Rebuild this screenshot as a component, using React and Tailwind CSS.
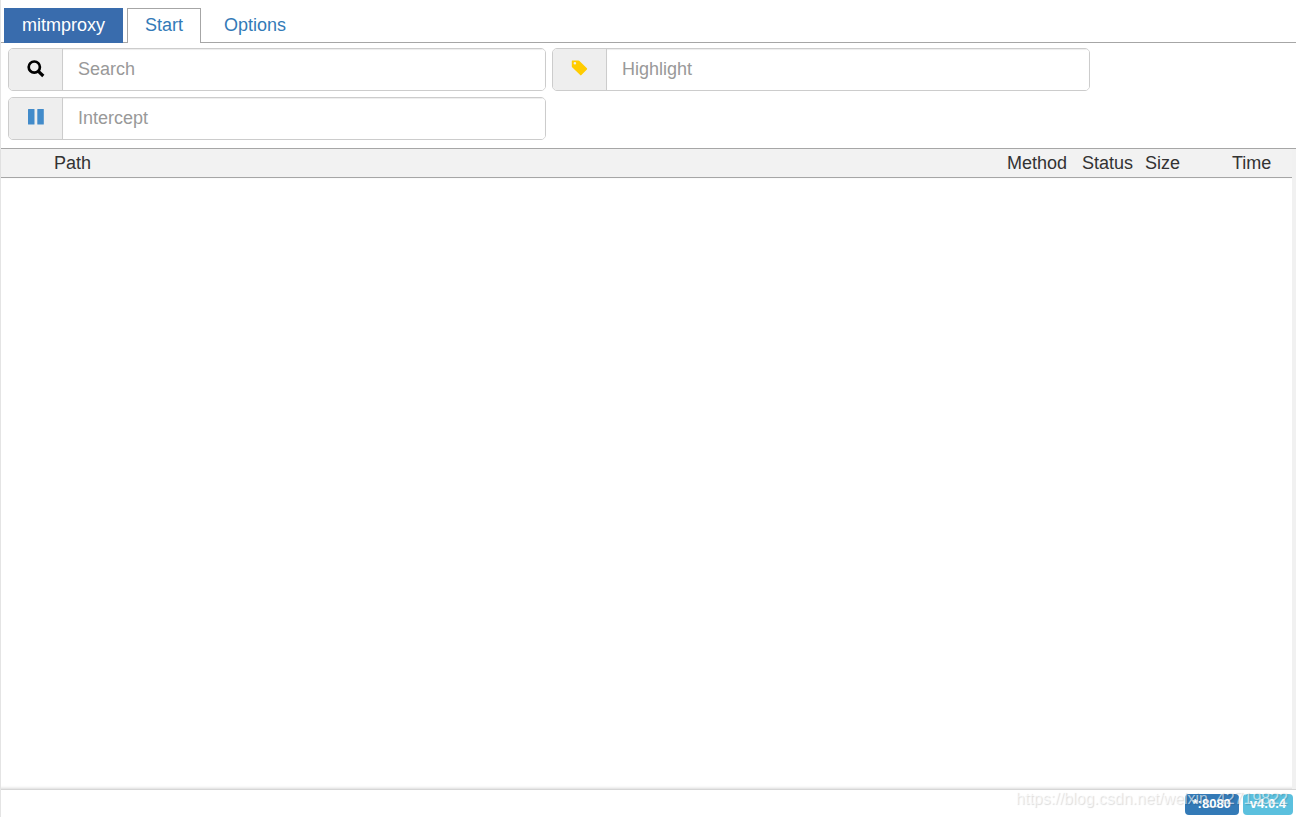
import { useState } from "react";

const SearchIcon = () => (
  <svg className="h-[18px] w-[18px]" viewBox="0 0 18 18" fill="none" stroke="#000">
    <circle cx="7.3" cy="7.1" r="5.6" strokeWidth="2.7" />
    <path d="M11.2 11.2l5.1 4.8" strokeWidth="3.2" />
  </svg>
);

const TagIcon = () => (
  <svg className="h-[18px] w-[18px]" viewBox="0 0 18 18" fill="#ffcc00">
    <path
      fillRule="evenodd"
      d="M.8.8Q.8.4 1.2.4H7.4Q8 .4 8.5.9L15.9 8.2Q16.4 8.8 15.9 9.4L10.4 15.1Q9.8 15.7 9.2 15.1L1.4 7.6Q.8 7 .8 6.4ZM3.9 2a1.3 1.3 0 1 0 0 2.6a1.3 1.3 0 0 0 0-2.6Z"
    />
  </svg>
);

const PauseIcon = () => (
  <svg className="h-[18px] w-[18px]" viewBox="0 0 18 18" fill="#428bca">
    <rect x="1" y="0" width="6.5" height="15.5" rx="0.5" />
    <rect x="10.3" y="0" width="6.5" height="15.5" rx="0.5" />
  </svg>
);

const filters = [
  { name: "Search", Icon: SearchIcon },
  { name: "Highlight", Icon: TagIcon },
  { name: "Intercept", Icon: PauseIcon },
];

function FilterInput({ name, Icon }) {
  const [value, setValue] = useState("");

  return (
    <div className="flex h-[43px] w-[42%] overflow-hidden rounded-[5px] border border-[#cccccc]">
      <label
        htmlFor={name}
        aria-label={name}
        className="flex w-[53px] shrink-0 items-center justify-center bg-[#eeeeee] pb-[2px]"
      >
        <Icon />
      </label>
      <input
        id={name}
        type="text"
        placeholder={name}
        value={value}
        onChange={(e) => setValue(e.target.value)}
        className="w-full min-w-0 border-l border-[#cccccc] bg-white px-[15px] pb-[2px] text-[#555555] shadow-[inset_0_1px_1px_rgba(0,0,0,0.075)] outline-none placeholder:text-[#999999]"
      />
    </div>
  );
}

export default function App() {
  return (
    <div className="flex min-h-screen flex-col border-l border-[#e4e4e4] bg-white font-['Liberation_Sans',Arial,sans-serif] text-[18px] leading-[24px] text-[#333333]">
      <header>
        <nav className="flex h-[43px] gap-1 border-b border-[#a6a6a6] pt-2 pl-[3px]">
          <a
            href="#file"
            className="-mb-px h-[35px] bg-[#396cad] px-[18px] pt-[5px] text-white"
          >
            mitmproxy
          </a>
          <a
            href="#start"
            className="-mb-px h-[35px] border border-b-0 border-[#a6a6a6] bg-white px-[17px] pt-[4px] text-[#337ab7]"
          >
            Start
          </a>
          <a href="#options" className="px-[19px] pt-[5px] text-[#337ab7]">
            Options
          </a>
        </nav>
        <div className="flex flex-wrap gap-[6px] px-[7px] pt-[5px] pb-2">
          {filters.map((f) => (
            <FilterInput key={f.name} {...f} />
          ))}
        </div>
      </header>

      <main className="flex flex-1 border-t border-[#a6a6a6]">
        <div className="flex-1 shadow-[inset_0_-4px_3px_-3px_rgba(0,0,0,0.15)]">
          <table className="w-full table-fixed border-collapse">
            <thead>
              <tr className="h-[28px] border-b border-[#a6a6a6] bg-[#f2f2f2] text-left shadow-[0_1px_1px_rgba(0,0,0,0.1)]">
                <td className="w-[13px]"></td>
                <td className="w-[40px]"></td>
                <th className="p-0 font-normal">Path</th>
                <th className="w-[75px] p-0 font-normal">Method</th>
                <th className="w-[63px] p-0 font-normal">Status</th>
                <th className="w-[87px] p-0 font-normal">Size</th>
                <th className="w-[60px] p-0 font-normal">Time</th>
              </tr>
            </thead>
            <tbody></tbody>
          </table>
        </div>
        <div className="w-1 bg-[#f1f1f1]"></div>
      </main>

      <footer className="relative flex h-[28px] items-end justify-end gap-1 border-t border-[#d6d6d6] pr-[3px] pb-[2px] text-[13px] leading-[20px] font-bold text-white">
        <span className="h-[21px] rounded-[4px] bg-[#337ab7] px-2">*:8080</span>
        <span className="h-[21px] rounded-[4px] bg-[#5bc0de] px-[7px]">v4.0.4</span>
        <span className="pointer-events-none absolute top-0 right-[8px] text-[16px] leading-[18px] font-normal text-white/60 [text-shadow:1px_1px_1px_rgba(0,0,0,0.14)]">
          https://blog.csdn.net/weixin_42719822
        </span>
      </footer>
    </div>
  );
}
